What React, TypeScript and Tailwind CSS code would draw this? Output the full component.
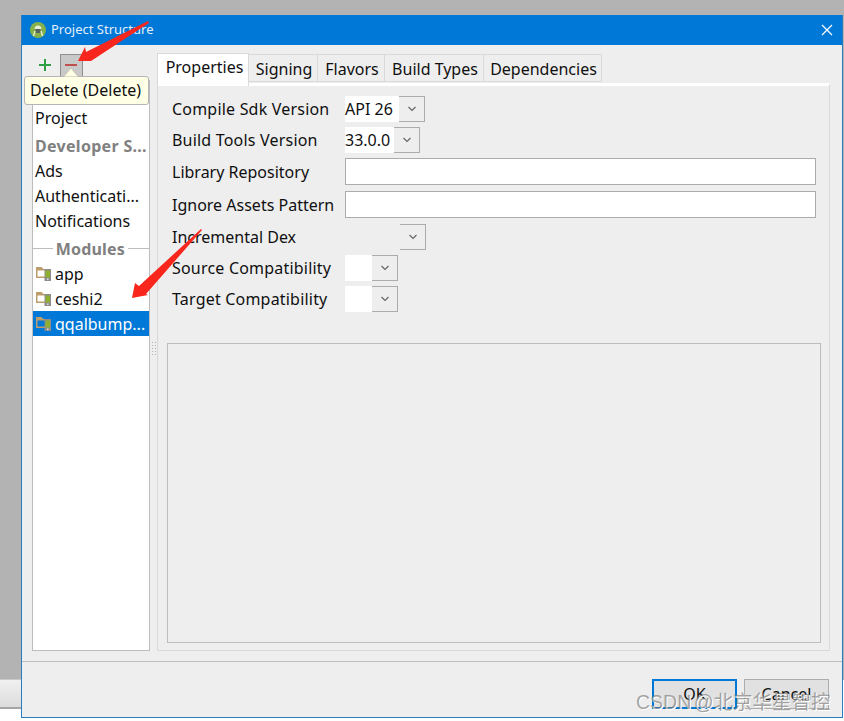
const font = { fontFamily: '"Noto Sans", "Noto Sans CJK SC", sans-serif' };

function ModuleIcon({ selected = false }: { selected?: boolean }) {
  return (
    <svg width="16" height="15" viewBox="0 0 16 15" className="shrink-0">
      <path d="M0 1h5.5l2 2H13v9H0z" fill="#bd9d6b" />
      <rect x="1.5" y="4.5" width="10" height="6" fill={selected ? "#0078d7" : "#ffffff"} />
      <rect x="8.5" y="3" width="6.5" height="12" fill="#8c8c8c" />
      <rect x="9.5" y="4.5" width="4.5" height="7" fill="#8fb02f" />
      <rect x="11" y="12.5" width="1.5" height="1.5" fill="#e0e0e0" />
    </svg>
  );
}

function Combo({ text, boxW, arrowW = 26 }: { text?: string; boxW: number; arrowW?: number }) {
  return (
    <div className="flex h-[26px]">
      <div className="flex items-center bg-white leading-none" style={{ width: boxW }}>
        {text}
      </div>
      <div
        className="flex items-center justify-center border border-l-0 border-[#acacac]"
        style={{ width: arrowW }}
      >
        <svg width="10" height="6" viewBox="0 0 10 6" fill="none" stroke="#666666" strokeWidth="1.2">
          <path d="M1.5 1 5 4.5 8.5 1" />
        </svg>
      </div>
    </div>
  );
}

function Field() {
  return <div className="h-[27px] w-[471px] border border-[#acacac] bg-white" />;
}

function Row({ label, children, className = "", wide = false }: { label: string; children: React.ReactNode; className?: string; wide?: boolean }) {
  return (
    <div className={`flex items-center ${className}`}>
      <div className={`w-[173px] shrink-0 ${wide ? "tracking-[0.2px]" : ""}`}>{label}</div>
      {children}
    </div>
  );
}

function Tab({ label, w }: { label: string; w: number }) {
  return (
    <div
      className="flex h-[28px] items-center justify-center border border-l-0 border-[#d9d9d9] bg-[#eeeeee] pl-[2px] pt-[1px]"
      style={{ width: w }}
    >
      {label}
    </div>
  );
}

function SideItem({ children }: { children: React.ReactNode }) {
  return <div className="flex h-[25px] items-center pl-[2px]">{children}</div>;
}

function ModuleItem({ label, selected = false }: { label: string; selected?: boolean }) {
  return (
    <div className={`flex h-[25px] items-center gap-[3px] pl-[3px] ${selected ? "bg-[#0078d7] text-white" : ""}`}>
      <ModuleIcon selected={selected} />
      <span>{label}</span>
    </div>
  );
}

export default function App() {
  return (
    <div className="relative flex h-[721px] w-[844px] overflow-hidden bg-white text-[16px] text-[#101010]" style={font}>
      <div className="flex w-[21px] shrink-0 flex-col">
        <div className="h-[680px] border-b border-[#c8c8c8] bg-[#b3b3b3]" />
        <div className="h-[29px] border-b-2 border-[#a5a5a5] bg-gradient-to-b from-[#f0f0f0] to-[#dcdcdc]" />
      </div>

      <div className="flex w-[822px] shrink-0 flex-col">
        <div className="h-[15px] bg-[#b3b3b3]" />
        <div className="flex h-[703px] flex-col border border-t-0 border-[#2a7bc0] bg-[#eeeeee]">
          {/* title bar */}
          <div className="flex h-[30px] shrink-0 items-center bg-[#0078d7] pl-[8px] pr-[9px] text-[13px] text-[#e4effa]">
            <svg width="16" height="16" viewBox="0 0 16 16" className="mr-[5px] shrink-0">
              <circle cx="8" cy="8" r="8" fill="#86b04a" />
              <path d="M4.5 7a3.5 3.5 0 0 1 7 0z" fill="#e6eed8" />
              <rect x="5.5" y="7" width="5" height="4" fill="#55635a" />
              <path d="M5 9 3.5 14M11 9l1.5 5" stroke="#e6eed8" strokeWidth="1.4" />
            </svg>
            <span>Project Structure</span>
            <svg width="12" height="12" viewBox="0 0 12 12" className="ml-auto" stroke="#ffffff" strokeWidth="1.2">
              <path d="M1 1l10 10M11 1 1 11" />
            </svg>
          </div>

          {/* body */}
          <div className="flex h-[617px] shrink-0 border-b border-[#bdbdbd]">
            <div className="ml-[10px] flex w-[118px] shrink-0 flex-col pb-[10px]">
              <div className="flex h-[35px] shrink-0 items-start pt-[9px]">
                <svg width="14" height="14" viewBox="0 0 14 14" className="ml-[6px] mt-[4px]" fill="#2f9e44">
                  <path d="M6 1h2v5h5v2H8v5H6V8H1V6h5z" />
                </svg>
                <div className="ml-[8px] flex h-[24px] w-[23px] items-center justify-center border border-[#8f8f8f] bg-[#c9c9c9] pb-[2px] pr-[2px]">
                  <div className="h-[2px] w-[12px] bg-[#c05050]" />
                </div>
              </div>
              <div className="flex-1 border border-[#bdbdbd] bg-white pt-[24px]">
                <SideItem>Project</SideItem>
                <div className="mt-[3px] flex h-[25px] items-center pl-[2px] font-bold tracking-[0.3px] text-[#808080]">Developer S...</div>
                <SideItem>Ads</SideItem>
                <SideItem>Authenticati...</SideItem>
                <SideItem>Notifications</SideItem>
                <div className="mt-[3px] flex h-[25px] items-center font-bold tracking-[0.2px] text-[#808080]">
                  <div className="h-px flex-1 bg-[#bdbdbd]" />
                  <span className="px-[3px]">Modules</span>
                  <div className="h-px w-[21px] bg-[#bdbdbd]" />
                </div>
                <ModuleItem label="app" />
                <ModuleItem label="ceshi2" />
                <ModuleItem label="qqalbump..." selected />
              </div>
            </div>

            {/* splitter */}
            <div className="flex w-[7px] shrink-0 flex-col items-center gap-[2px] pt-[297px]">
              {[0, 1, 2, 3, 4].map((i) => (
                <div key={i} className="h-[1px] w-[4px] border-x border-[#b0b0b0]" />
              ))}
            </div>

            <div className="flex w-[673px] shrink-0 flex-col pb-[10px]">
              <div className="flex h-[38px] shrink-0 items-end pb-[1px]">
                <div className="z-10 -mb-[4px] flex h-[33px] w-[92px] items-start justify-center border border-b-0 border-[#d9d9d9] bg-white pl-[3px] pt-[1px]">
                  Properties
                </div>
                <div className="flex">
                  <Tab label="Signing" w={69} />
                  <Tab label="Flavors" w={67} />
                  <Tab label="Build Types" w={99} />
                  <Tab label="Dependencies" w={118} />
                </div>
              </div>
              <div className="flex flex-1 flex-col border border-[#d9d9d9] border-t-[3px] border-t-white pl-[14px] pr-[8px] pt-[10px]">
                <div className="flex flex-col">
                  <Row label="Compile Sdk Version" wide>
                    <Combo text="API 26" boxW={54} />
                  </Row>
                  <Row label="Build Tools Version" className="mt-[5px]" wide>
                    <Combo text="33.0.0" boxW={49} />
                  </Row>
                  <Row label="Library Repository" className="mt-[5px]">
                    <Field />
                  </Row>
                  <Row label="Ignore Assets Pattern" className="mt-[6px]">
                    <Field />
                  </Row>
                  <Row label="Incremental Dex" className="mt-[6px]">
                    <div className="ml-[55px]">
                      <Combo boxW={0} />
                    </div>
                  </Row>
                  <Row label="Source Compatibility" className="mt-[5px]" wide>
                    <Combo boxW={27} />
                  </Row>
                  <Row label="Target Compatibility" className="mt-[5px]" wide>
                    <Combo boxW={27} />
                  </Row>
                </div>
                <div className="-ml-[5px] mt-[31px] h-[300px] w-[654px] border border-[#bdbdbd]" />
              </div>
            </div>
          </div>

          {/* footer */}
          <div className="flex flex-1 items-start justify-end gap-[7px] pr-[13px] pt-[17px]">
            <button className="h-[30px] w-[85px] border-2 border-[#0078d7] bg-[#e1e1e1]">OK</button>
            <button className="h-[30px] w-[85px] border border-[#adadad] bg-[#e1e1e1]">Cancel</button>
          </div>
        </div>
      </div>

      <div className="w-px shrink-0">
        <div className="h-[680px] bg-[#b3b3b3]" />
      </div>

      {/* tooltip over the toolbar */}
      <div className="absolute left-[24px] top-[76px] flex h-[29px] w-[125px] items-center justify-center rounded-[3px] border border-[#b5b5b5] bg-[#ffffe6] pb-[2px] pr-[2px]">
        Delete (Delete)
      </div>
      <svg className="pointer-events-none absolute left-0 top-0" width="844" height="721">
        <path d="M64 76.5 71 68 78 76.5" fill="#ffffe6" stroke="#c8c8b0" />
        <path d="M78 61 85 47 86 52 148 21 149 23 91 61 89 61z" fill="#f8261c" />
        <path d="M132 298 135 283 139 286 201 229 202 230 146 294 148 295z" fill="#f8261c" />
      </svg>

      {/* watermark */}
      <div
        className="pointer-events-none absolute left-[636px] top-[690px] whitespace-nowrap text-[19.5px] leading-[24px] text-[#808080]/70 [text-shadow:1px_1px_0_#ffffff] [word-spacing:-3px]"
        style={{ fontFamily: '"Liberation Sans", "Noto Sans CJK SC", sans-serif' }}
      >
        CSDN @北京华星智控
      </div>
    </div>
  );
}
